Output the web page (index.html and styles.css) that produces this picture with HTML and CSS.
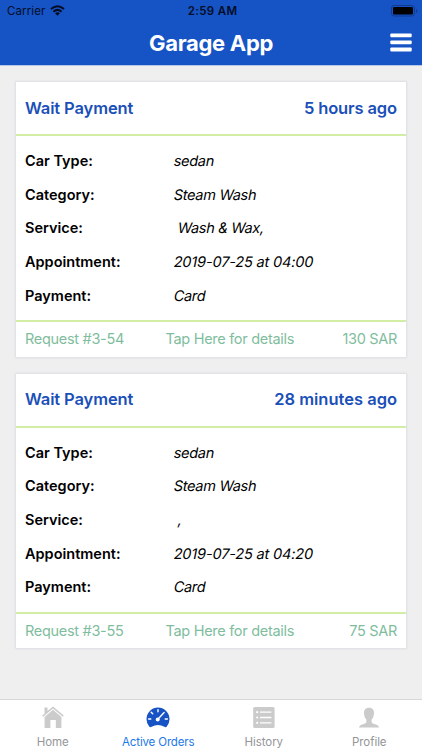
FILE: index.html
```html
<!DOCTYPE html>
<html lang="en">
<head>
<meta charset="utf-8">
<title>Garage App</title>
<link rel="stylesheet" href="styles.css">
</head>
<body>
<div class="app">
  <header class="header">
    <div class="status">
      <div class="carrier"><span>Carrier</span>
        <svg width="15" height="11" viewBox="0 0 15 11"><g fill="none" stroke="#030d26" stroke-width="2"><path d="M1 4.1Q7.5-1.5 14 4.1"/><path d="M3.4 6.7Q7.5 3.1 11.6 6.7"/></g><path d="M5.1 8.3Q7.5 6.4 9.9 8.3L7.5 10.7Z" fill="#030d26"/></svg>
      </div>
      <span class="clock">2:59 AM</span>
      <svg class="battery" width="27" height="12" viewBox="0 0 27 12"><rect x=".5" y=".5" width="23" height="10.5" rx="2.5" fill="none" stroke="#103b91"/><rect x="2" y="2" width="20" height="7.5" rx="1.2" fill="#000"/><path d="M25 4v4q1.4-.6 1.4-2T25 4" fill="#103b91"/></svg>
    </div>
    <div class="titlebar">
      <h1 class="title">Garage App</h1>
      <svg class="menu" width="22" height="19" viewBox="0 0 22 19"><g fill="#fff"><rect x=".3" y=".5" width="21.4" height="3.8" rx="1"/><rect x=".3" y="7.5" width="21.4" height="3.8" rx="1"/><rect x=".3" y="14.6" width="21.4" height="3.8" rx="1"/></g></svg>
    </div>
  </header>
  <main class="orders">
    <article class="card">
      <div class="card-head"><span class="state">Wait Payment</span><span class="age">5 hours ago</span></div>
      <dl class="details">
        <dt>Car Type:</dt><dd>sedan</dd>
        <dt>Category:</dt><dd>Steam Wash</dd>
        <dt>Service:</dt><dd class="indent">Wash &amp; Wax,</dd>
        <dt>Appointment:</dt><dd class="date">2019-07-25 at 04:00</dd>
        <dt>Payment:</dt><dd>Card</dd>
      </dl>
      <div class="card-foot"><span>Request #3-54</span><span>Tap Here for details</span><span>130 SAR</span></div>
    </article>
    <article class="card">
      <div class="card-head"><span class="state">Wait Payment</span><span>28 minutes ago</span></div>
      <dl class="details">
        <dt>Car Type:</dt><dd>sedan</dd>
        <dt>Category:</dt><dd>Steam Wash</dd>
        <dt>Service:</dt><dd class="indent">,</dd>
        <dt>Appointment:</dt><dd class="date">2019-07-25 at 04:20</dd>
        <dt>Payment:</dt><dd>Card</dd>
      </dl>
      <div class="card-foot"><span>Request #3-55</span><span>Tap Here for details</span><span>75 SAR</span></div>
    </article>
  </main>
  <nav class="tabs">
    <div class="tab">
      <svg width="26" height="24" viewBox="0 0 26 24" fill="#cbcbcb"><path d="M4.5 8.8V2.6h3v3.4L13 1.5l10.8 9-1 1.2L13 3.6 3.2 11.7l-1-1.2Z"/><path d="M13 4.8 21.4 12v11h-5.6v-8h-5.4v8H4.6V12Z"/></svg>
      <span>Home</span>
    </div>
    <div class="tab active">
      <svg width="26" height="24" viewBox="0 0 26 24"><path d="M4.2 21.5A11.5 11.5 0 1 1 21.8 21.5Q20.8 22.8 19.4 21.8Q13 18.2 6.6 21.8Q5.2 22.8 4.2 21.5Z" fill="#1653c5"/><g stroke="#fff" stroke-width="1.4" stroke-linecap="round"><path d="M3.6 14h2.2M20.2 14h2.2M13 4.6v2.2M6.2 7.2l1.5 1.5"/><path d="m12.6 14.6 6.5-7"/></g><circle cx="12.7" cy="14.4" r="2" fill="#fff"/></svg>
      <span>Active Orders</span>
    </div>
    <div class="tab">
      <svg width="26" height="24" viewBox="0 0 26 24"><rect x="2.2" y="2" width="21.4" height="21" rx="1.6" fill="#cbcbcb"/><g stroke="#fff" stroke-width="1.3"><path d="M9 7.2h11.4M9 12.5h11.4M9 17.8h11.4"/></g><g fill="#fff"><circle cx="6.2" cy="7.2" r="1.1"/><circle cx="6.2" cy="12.5" r="1.1"/><circle cx="6.2" cy="17.8" r="1.1"/></g></svg>
      <span>History</span>
    </div>
    <div class="tab">
      <svg width="26" height="24" viewBox="0 0 26 24"><path d="M13 2.7c3.600 0 5.200 2.400 5 5.500-.1 2.800-1.100 5-2.400 6.300v2.600c.3 1.500 2 1.800 4.200 2.500 2 .7 3 1.400 3.200 3H3c.2-1.600 1.200-2.300 3.200-3 2.200-.7 3.900-1 4.200-2.500v-2.600C9.100 13.200 8.100 11 8 8.200c-.2-3.100 1.400-5.500 5-5.500Z" fill="#cbcbcb"/></svg>
      <span>Profile</span>
    </div>
  </nav>
</div>
</body>
</html>
```
FILE: styles.css
```css
* { box-sizing: border-box; }
body { margin: 0; background: #efeff0; font-family: Inter, "Liberation Sans", sans-serif; color: #000; }
svg { display: block; flex: none; }
.app { width: 422px; height: 750px; display: flex; flex-direction: column; overflow: hidden; }
.header { height: 66px; flex: none; background: #1653c5; border-bottom: 1px solid #b5c6e8; }
.status { height: 21px; display: grid; grid-template-columns: 1fr auto 1fr; align-items: center; padding: 0 4px 0 7px; font-size: 11.5px; color: #030d26; }
.carrier { display: flex; align-items: center; gap: 5px; letter-spacing: 0.1px; }
.clock { font-weight: 600; letter-spacing: 0.35px; }
.battery { justify-self: end; }
.titlebar { height: 43px; display: grid; grid-template-columns: 1fr auto 1fr; align-items: center; padding: 0 10px; }
.title { grid-column: 2; margin: 0; font-size: 22px; line-height: 26px; font-weight: 700; color: #fff; letter-spacing: -0.3px; }
.menu { justify-self: end; }
.orders { flex: 1; display: flex; flex-direction: column; gap: 17px; padding: 16px 16px 0; }
.card { height: 274.6px; flex: none; display: flex; flex-direction: column; background: #fff; box-shadow: 0 0 2px 1px #dcdee2; }
.card-head { height: 54px; flex: none; display: flex; align-items: center; justify-content: space-between; padding: 0 9px 1px; border-bottom: 2px solid #d2eda6; font-size: 16.5px; font-weight: 600; color: #1b50b8; }
.state, .age { letter-spacing: -0.12px; }
.details { flex: 1; margin: 0; padding: 8px 9px; display: grid; grid-template-columns: 149px 1fr; grid-auto-rows: 33.6px; align-items: center; font-size: 14.5px; }
.details dt { font-weight: 600; }
/* Slants the upright face so it keeps its two-storey "a". */
.details dd { margin: 0; letter-spacing: -0.28px; transform: skewX(-11deg); }
.details .indent { padding-left: 4px; }
.details .date { letter-spacing: -0.15px; }
.card-foot { height: 37px; flex: none; display: grid; grid-template-columns: 140.5px auto 1fr; align-items: center; padding: 0 9px 2px; border-top: 2px solid #d2eda6; font-size: 14.5px; letter-spacing: -0.3px; color: #80bd9e; }
.card-foot > :last-child { justify-self: end; }
.tabs { height: 51px; flex: none; display: grid; grid-template-columns: repeat(4, 1fr); background: #fff; border-top: 1px solid #d8d8d8; font-size: 11.5px; letter-spacing: -0.05px; color: #949599; }
.tab { display: flex; flex-direction: column; align-items: center; padding-top: 5px; line-height: 14px; gap: 6px; }
.active { color: #1b78ea; letter-spacing: -0.15px; }
```
